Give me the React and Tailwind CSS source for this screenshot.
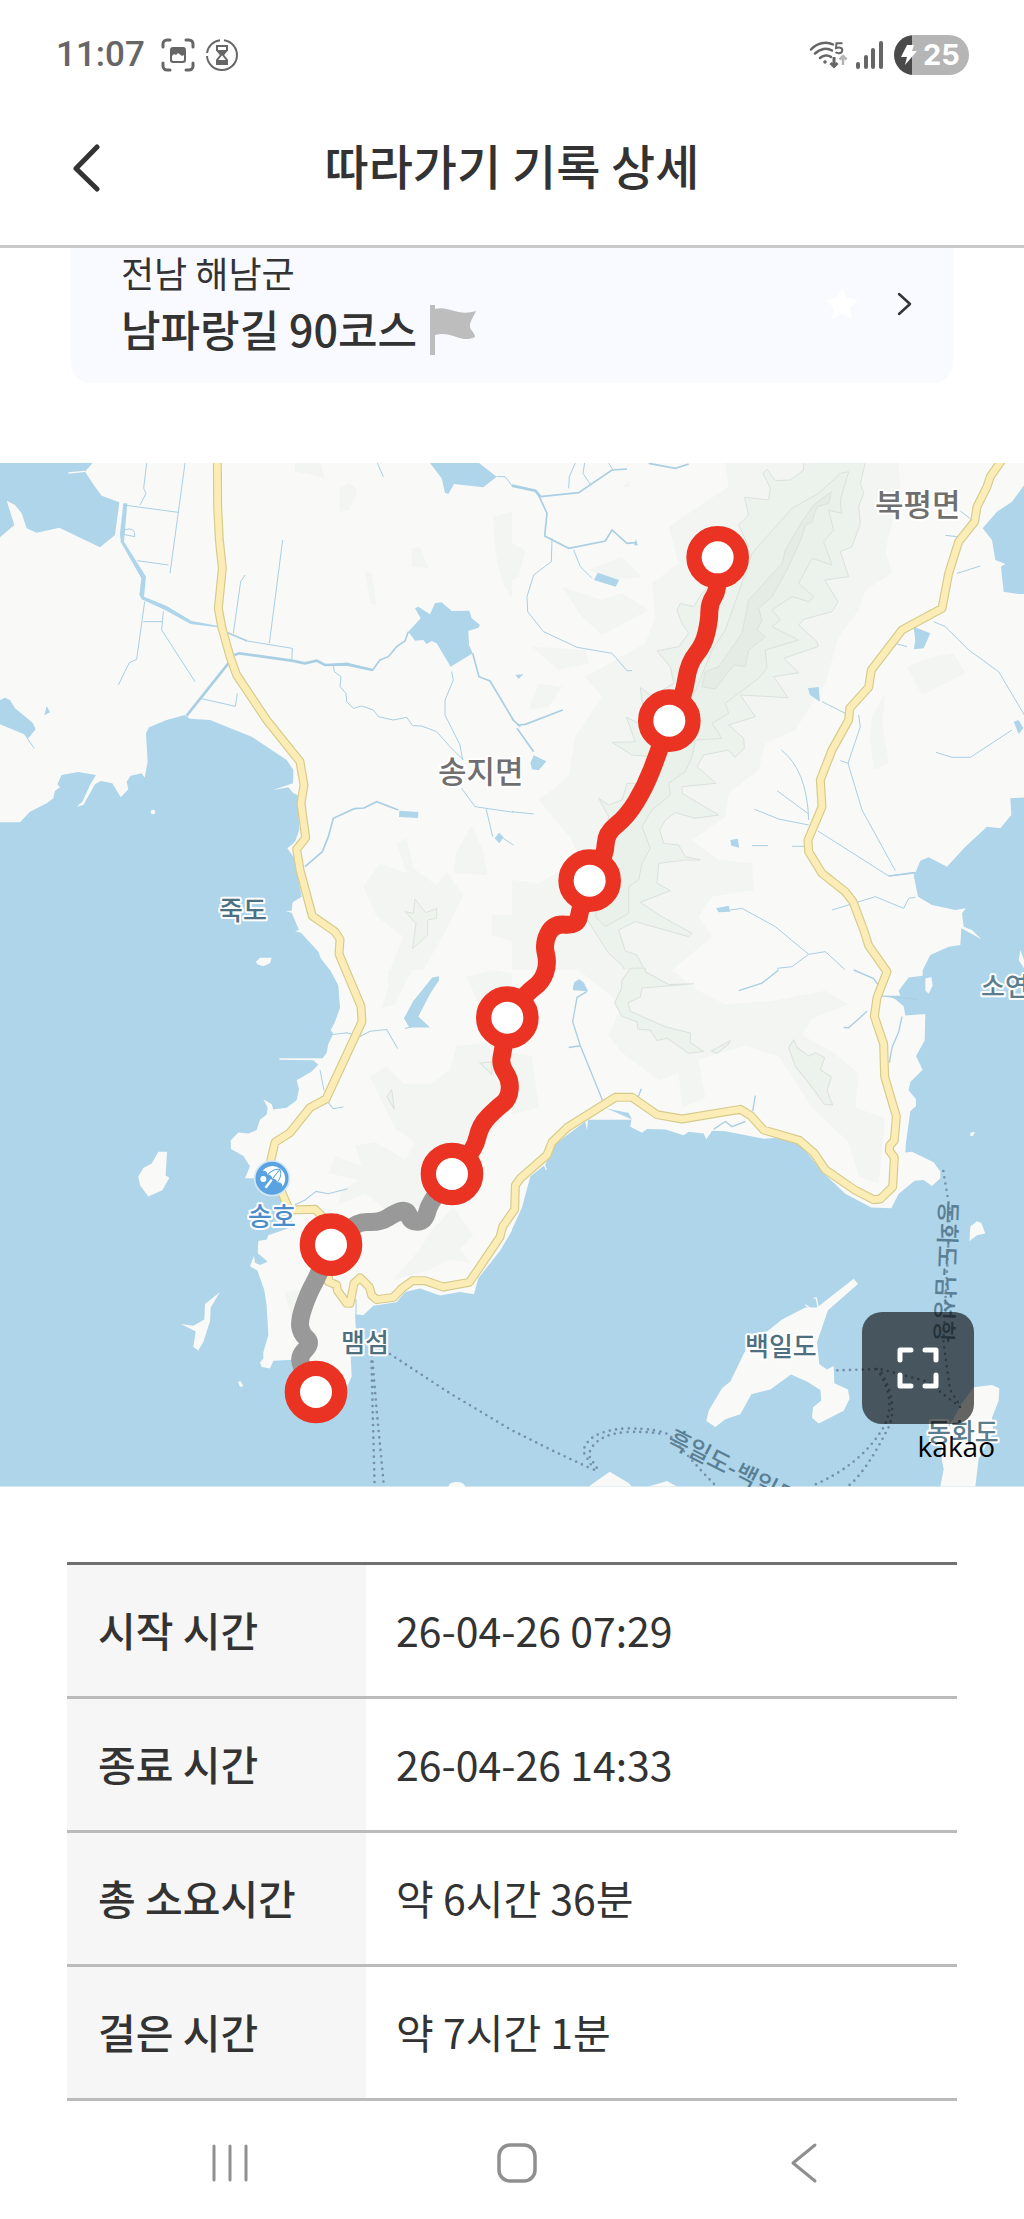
// ─── App.jsx ─────────────────────────────────────────────────────────────────
// Trail record detail: course card, kakao map with the walked route, time table.

const RECORDS = [
  { label: "시작 시간", value: "26-04-26 07:29" },
  { label: "종료 시간", value: "26-04-26 14:33" },
  { label: "총 소요시간", value: "약 6시간 36분" },
  { label: "걸은 시간", value: "약 7시간 1분" },
];

// Checkpoints along the route, in map drawing units
const CHECKPOINTS = [
  [2153, 283],
  [2008, 773],
  [1769, 1253],
  [1522, 1664],
  [1356, 2133],
  [993, 2345],
  [948, 2787],
];

const ROUTE_DONE = [
  [2153, 283], [2158, 375], [2128, 421], [2128, 471], [2111, 546], [2066, 600],
  [2051, 701], [2008, 773], [1976, 866], [1936, 971], [1881, 1061], [1818, 1110],
  [1816, 1176], [1769, 1253], [1741, 1336], [1732, 1388], [1660, 1382], [1630, 1441],
  [1645, 1501], [1626, 1556], [1580, 1590], [1522, 1664], [1510, 1759], [1500, 1805],
  [1532, 1852], [1526, 1908], [1492, 1934], [1440, 1986], [1425, 2058], [1355, 2133],
];

const ROUTE_LEFT = [
  [1355, 2133], [1290, 2213], [1275, 2275], [1232, 2277], [1222, 2240], [1190, 2247],
  [1140, 2279], [1070, 2275], [993, 2344], [953, 2441], [925, 2492], [898, 2570],
  [903, 2611], [936, 2640], [896, 2680], [908, 2719], [948, 2787],
];

const ROAD =
  "M652 -10L653 131L658 231L667 316L655 436L665 491L690 581L710 636L800 771L900 896L912 966L903 1021L917 1124L890 1159L900 1221L937 1359L1005 1406L1020 1429L1017 1473L1083 1630L1086 1676L978 1908L930 1934L870 2009L825 2038L812 2094L845 2187L868 2241L945 2239L993 2285L985 2456L1010 2466L1012 2482L1040 2521H1050L1062 2461L1080 2444L1108 2472L1115 2497L1130 2510L1180 2503L1205 2477L1238 2453H1275L1330 2472L1408 2458L1500 2322L1508 2291L1544 2239L1546 2167L1561 2146L1641 2076L1656 2038L1701 1994L1846 1903H1896L1971 1955L2046 1968L2221 1939L2251 1957L2291 2001L2398 2032L2441 2069L2476 2120L2566 2182L2621 2210L2641 2208L2678 2172L2683 2084L2668 2063L2669 2048L2683 2032L2689 1960L2654 1841L2651 1743L2623 1660L2631 1604L2661 1526L2606 1448L2591 1401L2559 1316L2536 1286L2466 1231L2426 1166L2424 1131L2466 1031L2461 951L2496 861L2546 771L2549 736L2606 673L2614 621L2706 501L2826 436L2846 331L2876 236L2924 176L2931 131L2961 71L2971 41L3010 -15";

const LABELS = [
  { text: "북평면", x: 875, y: 53, size: "text-[31px]", fill: "fill-[#6f6f6f]" },
  { text: "송지면", x: 438, y: 320, size: "text-[31px]", fill: "fill-[#6f6f6f]" },
  { text: "죽도", x: 219, y: 457, size: "text-[26px]", fill: "fill-[#4a7082]" },
  { text: "소연도", x: 981, y: 533, size: "text-[26px]", fill: "fill-[#5b7d8d]" },
  { text: "송호", x: 248, y: 763, size: "text-[26px]", fill: "fill-[#4b8ccb]" },
  { text: "맴섬", x: 341, y: 889, size: "text-[26px]", fill: "fill-[#4d6f80]" },
  { text: "백일도", x: 745, y: 893, size: "text-[26px]", fill: "fill-[#4d6f80]" },
  { text: "동화도", x: 927, y: 979, size: "text-[26px]", fill: "fill-[#5b7d8d]" },
];

// Rounds the corners of a track by curving through the midpoints
function smoothPath(points) {
  const [first, ...rest] = points;
  const last = rest[rest.length - 1];
  let d = `M${first.join(" ")}`;
  for (let i = 0; i < rest.length - 1; i++) {
    const [x, y] = rest[i];
    const [nx, ny] = rest[i + 1];
    d += `Q${x} ${y} ${(x + nx) / 2} ${(y + ny) / 2}`;
  }
  return `${d}L${last.join(" ")}`;
}

function StatusBar() {
  return (
    <div className="flex h-[91px] items-start justify-between pt-[35px] pr-[55px] pl-14">
      <div className="flex h-10 items-center text-[#666]">
        <span className="font-[Roboto,sans-serif] text-[35px] leading-10 font-medium">11:07</span>
        <svg className="ml-4 size-[34px]" viewBox="0 0 34 34" fill="none" stroke="currentColor" strokeWidth="3" strokeLinecap="round">
          <path d="M2 9V6a4 4 0 0 1 4-4h3M25 2h3a4 4 0 0 1 4 4v3M32 25v3a4 4 0 0 1-4 4h-3M9 32H6a4 4 0 0 1-4-4v-3" />
          <path d="M12 9h10a3 3 0 0 1 3 3v10a3 3 0 0 1-3 3H12a3 3 0 0 1-3-3V12a3 3 0 0 1 3-3Zm-1 9v4l1 1h10l1-1v-5l-2 1-4-3-2 2-2-1Z" fill="currentColor" fillRule="evenodd" stroke="none" />
        </svg>
        <svg className="ml-[10px] size-[34px]" viewBox="0 0 34 34" fill="none" stroke="currentColor" strokeWidth="2">
          <path d="M19 2.200A15 15 0 1 1 2 18M2 15A15 15 0 0 1 15 2.200" />
          <path d="M12 8h10v4l-4 5 4 5v4H12v-4l4-5-4-5Z" />
          <path d="M13 13h8l-3 3h-2ZM13 23h8v3h-8Z" fill="currentColor" />
        </svg>
      </div>
      <div className="flex h-10 items-center text-[#666]">
        <svg className="h-[30px] w-[40px]" viewBox="0 0 40 30" fill="none" stroke="currentColor" strokeWidth="2.500">
          <path d="M2 9.500C8 3 17 1 24 4.500M6 13.500c5-5 12-6 17-3M11 18c3-3 8-3.500 11-1" strokeLinecap="round" />
          <circle cx="16" cy="22" r="1.800" fill="currentColor" stroke="none" />
          <path d="M25 17v9M21.500 23l3.500 3.500 3.500-3.500" strokeWidth="3" />
          <path d="M34 25v-8M30.500 19.500 34 16l3.500 3.500" stroke="#b5b5b5" />
          <path d="M33.500 3.200h-6l-.5 4.800c5-1.500 7 .5 6 3.500-1 2.200-4.500 2.200-6.500.8" strokeWidth="2" />
        </svg>
        <svg className="ml-[7px] h-[28px] w-[28px]" viewBox="0 0 28 28" fill="currentColor">
          <rect x="0" y="21" width="4" height="7" rx="2" />
          <rect x="8" y="14" width="4" height="14" rx="2" />
          <rect x="15" y="7" width="4" height="21" rx="2" />
          <rect x="23" y="0" width="4" height="28" rx="2" />
        </svg>
        <div className="ml-[10px] flex h-10 w-[75px] items-center overflow-hidden rounded-full bg-[linear-gradient(to_right,#4a4a4a_18px,#b5b5b5_18px)] pl-[7px] text-white">
          <svg className="h-[22px] w-[16px]" viewBox="0 0 16 22" fill="currentColor">
            <path d="M6 1h7l-2 6h5L4 21l2-8H0Z" />
          </svg>
          <span className="ml-[6px] font-[Inter,sans-serif] text-[29px] leading-10 font-bold">25</span>
        </div>
      </div>
    </div>
  );
}

function Header() {
  return (
    <header className="relative flex h-[157px] items-center justify-center border-b-3 border-[#c9c9c9]">
      <button type="button" aria-label="뒤로" className="absolute left-[69px] p-1">
        <svg className="h-[48px] w-[27px]" viewBox="0 0 27 48" fill="none" stroke="#333" strokeWidth="5" strokeLinecap="round" strokeLinejoin="round">
          <path d="M24 3 3 24.500 24 45" />
        </svg>
      </button>
      <h1 className="pb-2 text-[48px] leading-[56px] font-medium">따라가기 기록 상세</h1>
    </header>
  );
}

function CourseCard() {
  return (
    <section className="px-[71px]">
      <a href="#course" className="flex items-center justify-between rounded-b-[20px] bg-[#f9faff] pr-[40px] pb-[23px] pl-[50px]">
        <div>
          <p className="text-[36px] leading-[48px]">전남 해남군</p>
          <div className="flex items-center gap-[13px]">
            <h2 className="text-[43px] leading-[64px] font-medium">남파랑길 90코스</h2>
            <svg className="mt-1 h-[50px] w-[47px]" viewBox="0 0 47 50" fill="#bdbdbd">
              <path d="M0 0h5v4c14-4 22 8 41 2-3 7-6 10-6 15s5 6 5 11c-14 7-24-7-40-2v20H0Z" />
            </svg>
          </div>
        </div>
        <div className="flex items-center gap-[38px]">
          <svg className="size-[34px]" viewBox="0 0 34 34" fill="#fff">
            <path d="m17 1 5 10 11 2-8 8 2 11-10-5-10 5 2-11-8-8 11-2Z" />
          </svg>
          <svg className="h-[24px] w-[16px]" viewBox="0 0 16 24" fill="none" stroke="#333" strokeWidth="2.500" strokeLinecap="round" strokeLinejoin="round">
            <path d="m2 2 11 10L2 22" />
          </svg>
        </div>
      </a>
    </section>
  );
}

// The ground is drawn as four tiles, each in its own coordinates.
function TileNorthWest() {
  return (
    <g transform="translate(0 -39)">
      <g fill="#f3f5f3">
        <path d="M885 39h75l15 45-90-20ZM1018 115l30-15 25 20-25 60-30 5ZM1235 295l25-5 25 65-50-5ZM1095 368h20l15 100-20-10ZM1480 200l56-15v260l-30-50-20-90ZM1415 1125l35 80 12 70-100-5 5-60Z" />
        <path d="M1190 1180l30-15 20 90 70 50 30-40 50 70-60 120-60 105h-100l40-100-80-60-40-90 50-70 80 30ZM1475 1395h61v80l-60-20Z" />
      </g>
      <path d="M1245 1348l32 40 33-13v30l-27 5v45l-45 40 10-75-33-35 25 5Z" fill="#eef3ee" stroke="#dde3dd" strokeWidth="3" />
      <g fill="#aed5ea">
        <path d="M0 39H278L255 65L285 110L305 137L358 157L345 255L300 292L178 233L110 248L80 235L65 190L45 165L20 152L43 225L0 262Z" />
        <path d="M1290 39H1437L1490 80L1450 112L1362 102L1345 132L1335 128L1325 85Z" />
        <path d="M1245 475L1255 470L1290 493L1305 460L1325 457L1355 483L1408 482L1415 505L1440 525L1435 533L1405 543L1407 585L1418 610L1352 650L1310 580L1295 573L1280 582L1270 570L1245 572L1225 545L1262 505Z" />
        <path d="M0 750L15 743L30 750L45 775L98 818L107 838L83 867L72 853L0 823ZM140 768l10 19-17 9ZM1198 1082l57 4-1 18-57-3ZM1484 1165l13-17 14 14-13 18Z" />
        <path d="M0 1117H60L90 1085L140 1060L160 1045L165 1022L180 1012L172 1003L185 975L235 966L288 975L270 1005L247 1055L230 1070L250 1065L285 1003L303 993L337 1000L362 1042L385 1018L380 995L392 977L425 970L434 983L443 935L438 850L447 832L500 810L555 795L570 806L630 810L755 860L860 930L880 960L879 1000L817 1021L865 1012L880 1030L893 1035L898 1140L885 1175L862 1195L883 1225L905 1340L878 1357L875 1382L857 1384L875 1388L897 1440L885 1444L903 1448L955 1505L962 1525L990 1561H0Z" />
        <path d="M360 250L370 160H382L372 275L438 380L432 440L500 468L575 513L652 527L652 532L572 522L495 480L425 448L418 435L424 385L362 275Z" />
      </g>
      <path d="M205 69L255 64" stroke="#f9f9f8" strokeWidth="4" />
      <g fill="none" stroke="#aacfe3" strokeWidth="3">
        <path d="M440 39L431 115L438 130L420 165M555 39L510 370M370 165L535 187M372 240q35-12 32 20l-34-7M412 332L505 345M434 455L410 628L388 638L355 705M490 485L485 540L585 695M430 515H487M735 375L722 395L700 550M848 270L808 580M735 572L877 595L875 635M600 745L706 769L712 730" />
        <path d="M83 867L103 895M1132 39L1150 80M1490 80L1515 80L1540 112M1000 645L1003 665L1023 680L1020 710L1038 730L1040 755L1060 775L1085 768L1120 780L1135 800L1180 810L1220 802L1238 827L1265 828L1310 845L1350 890L1390 930M1355 665L1360 690L1335 750V795L1380 885L1388 930M1385 1015L1425 1070L1540 1087M1458 1075L1478 1160M1510 1165L1540 1185" />
        <path d="M683 548L740 572M985 645L1040 640L1118 660L1140 630L1165 620L1190 590L1215 573L1225 545M1418 610L1437 680L1470 693L1540 810M915 1250L967 1205L985 1160L1000 1105L1063 1076L1092 1074L1130 1055L1195 1080" strokeWidth="5" />
        <path d="M560 797L685 640M703 615L718 610L875 632L915 640L950 632L975 645L1040 643L1118 660" strokeWidth="8" />
      </g>
      <g fill="#f9f9f8">
        <circle cx="459" cy="1086" r="7" />
        <path d="M768 1535L780 1523H815L810 1540L790 1549L772 1543Z" />
      </g>
    </g>
  );
}

function TileNorthEast() {
  return (
    <g transform="translate(1536 -39)">
      <path d="M640 39H1160L1165 120L1120 300L1140 370L1060 420L1040 480L980 560L940 700L900 760L850 840L760 880L740 960L650 1030L640 1100L540 1170L620 1230L720 1240L725 1320L600 1340L560 1400L600 1460L480 1561H0V1290L80 1300L200 1230L180 1170L80 1050L170 980L190 860L270 740L220 680L400 580L430 500L420 400L500 340L470 230L650 110Z" fill="#f2f5f2" />
      <path d="M150 410l120 40 60-20 80 50-140 75-60-55ZM230 360l100-40 60 60-80 10ZM60 590l160 10 10 40-90 20ZM50 780l30-80 70 10-40 60ZM1185 650l80-30 60-10 35 60-130 65ZM1080 800l40-70-10 90 20 120-45 20-10-90ZM0 280l40 20-20 80-20 10ZM330 110l25-18-5 20Z" fill="#f2f5f2" />
      <g stroke="#dbe2dc" strokeWidth="3" strokeLinejoin="round">
        <path d="M875 30V60L835 90L790 92L765 58L753 70L775 115L770 150L697 142L710 195L680 225L710 290L570 430L545 470L505 460L495 480L510 520L530 550L500 590L435 603L475 650L485 700L420 740L385 712L390 750L400 830L343 802L370 875L300 877L360 915L420 920L400 1000L345 1000L330 1050L290 1065L260 1045L290 1100L270 1200L220 1400L290 1510L330 1545L340 1565H400L375 1515L340 1503L320 1440L370 1415L530 1460L540 1450L450 1400L385 1357L475 1322L435 1300L440 1240L520 1230H565L520 1220L500 1185L455 1180L443 1140L460 1110L490 1088L550 1105L620 1095L510 1030V1010L612 1000L555 950L575 915L650 900L668 922L697 895L695 865L650 825L730 800L685 735L828 743L785 680L860 668L815 625L918 590L915 575L860 525L875 508L960 485L978 455L938 390L1010 380L1000 350L985 305L1020 290L1045 220L1040 170L1055 130L1045 100L1062 30Z" fill="#ecf3ed" />
        <path d="M1010 65L985 150L988 190L950 180L965 240L935 275L960 345L900 325L860 400L905 440L890 455L840 440L780 480L805 510L780 530L860 570L760 600L765 655L740 685L640 760L650 790L600 820L630 865L550 870L540 920L520 965L470 1000L475 1035L420 1080L390 1130L415 1195L390 1240L380 1290L350 1310V1390L280 1430L250 1400L300 1180L460 920L560 700L600 600L640 540L700 370L720 310L840 175L920 130L985 70Z" fill="#e9f1ea" />
        <path d="M958 125L950 160L915 170L900 215L880 225L870 260L825 360L780 440L740 475L750 510L735 540L760 560L710 600L700 650L665 645L610 717L570 710L580 665L620 650L690 550L710 450L810 340L820 300L870 215L905 165Z" fill="#e4ece5" />
      </g>
      <g fill="#aed5ea">
        <path d="M1540 100L1500 155L1455 185L1412 235L1440 270L1450 330L1480 342L1467 350L1475 425L1520 432H1540Z" />
        <path d="M1540 1042L1495 1045L1498 1095L1465 1135L1425 1130L1360 1190L1305 1250L1250 1222L1225 1232L1210 1268L1205 1275L1218 1340L1260 1365L1330 1380L1362 1375L1350 1390L1355 1430L1380 1440L1408 1468L1385 1455L1348 1435L1345 1485L1310 1490L1255 1515L1232 1561H1540Z" />
        <path d="M257 368l64 22-10 20-65-20ZM1205 530l50 20-20 45-30 3 5-25ZM888 715l32-4 4 44-30-20ZM55 940l10-24 38 18-23 27-20-3ZM655 1170l22-4 5 27-24-6ZM612 1375l38-8 5 18-35 2ZM10 675l25-3-15 14ZM1505 815l15-5 14 24-14 18ZM366 285l6-18 6 20Z" />
      </g>
      <g fill="none" stroke="#aacfe3" strokeWidth="3">
        <path d="M190 39L172 80L170 115M218 39L213 70L235 103M290 39L303 60M120 265L118 335L65 375L45 440L47 485L95 545L195 592L300 610L345 662H360M185 300L205 350L240 385M0 1085L65 1092M1265 515L1300 530L1370 600L1460 665L1540 800M1500 840L1375 922L1320 922L1272 907M930 755L1000 790M1040 795L1045 830L1008 940L1050 1080L1150 1262M985 932L1010 940M808 900Q885 960 890 1110M795 1022L890 1092M728 1078L800 1107L890 1125M918 1143L1130 1278L1210 1268M720 1187H768M840 1189H880M655 1380L690 1375L790 1430L890 1513L940 1505L1000 1560M890 1513L840 1550L795 1555M960 1380L1090 1340L1175 1375L1190 1345L1210 1342M1335 370L1405 348M1155 582L1185 590M1345 183L1380 210M1300 256L1335 260" />
        <path d="M75 125L105 190L98 258L170 295L280 273L300 240L345 280L370 278M85 140L200 128L300 60L345 57M410 40L490 55L530 42M15 825L40 823L152 780M15 835L65 905M0 807L25 830M1130 1278L1210 1268" strokeWidth="5" />
        <path d="M0 107L70 122L85 140" strokeWidth="8" />
      </g>
      <path d="M1525 1500L1540 1540V1561L1520 1530Z" fill="#f9f9f8" />
    </g>
  );
}

function TileSouthWest() {
  return (
    <g transform="translate(0 1521) scale(1 1.033)">
      <path d="M0 0H1536V1500H0Z" fill="#aed5ea" />
      <path d="M990 -1L1015 45L1020 110L1005 150L992 175L1000 185L985 215L980 240L968 256H838V261L940 262L955 275L935 295L890 320L897 345L890 378L860 400L820 405L815 390L790 375L803 400L800 420L780 435L770 465L745 475L715 472L692 495L693 520L730 540L750 570L735 605H765L850 650L870 700L880 745L805 770L800 783L775 787L773 822L803 847L780 857L765 850L762 830L750 860L772 873L793 930L800 975L805 1060L790 1110V1128L780 1140L785 1153L810 1157L820 1135L880 1132L950 1220L1040 1215L1055 1180L1052 1120L1060 1070L1068 1050L1065 1000L1090 1003L1120 975L1190 965L1215 935L1260 925L1320 945L1380 935L1422 942L1435 895L1500 815L1537 755V-1Z" fill="#f9f9f8" />
      <path d="M1165 0h70l-50 100-40 10 20-60ZM1400 20l80-20 56 10v90l-100 0ZM1110 310l50-30 50 50 80 0 60-40 20-70 166-15V400l-100 120-20 80-60 10-80 70-100 30-80-60-80 30 10-40 50-30-90-20 20-50 80 30-20-60 60-10 90 50 30-50-60-40ZM1300 750l60-60 60 80-40 40 30 40-60-10-60 30-110 30 80-90ZM855 935l60-10-40 90Z" fill="#f2f5f2" />
      <path d="M1175 348l-14 20 22 36ZM1440 270l35-3v36Z" fill="#eef3ee" stroke="#dbe2dc" strokeWidth="3" />
      <path d="M1297 22l20-4v12L1290 70L1255 135L1290 167H1228L1212 140L1240 90Z" fill="#aed5ea" />
      <path d="M1000 187L1040 182L1080 193L1110 178L1160 173L1193 228M960 290L972 350M985 385L1000 403L1030 398M885 682L915 668L948 643L985 650L1043 635M1068 955V1000M1215 170L1235 165" fill="none" stroke="#aacfe3" strokeWidth="3" />
      <g fill="#f9f9f8">
        <path d="M475 528H501L497 597L508 603L487 640L445 658L420 625L415 600L430 575L455 562Z" />
        <path d="M660 935L632 980L630 1020L610 1080L595 1105L580 1095L587 1050L543 1028L580 1033L613 1015L615 970Z" />
        <path d="M714 1196l8-2 8 14-10 3Z" />
        <ellipse cx="1370" cy="1500" rx="25" ry="13" />
      </g>
    </g>
  );
}

function TileSouthEast() {
  return (
    <g transform="translate(1536 1521) scale(1 1.033)">
      <path d="M0 0H1536V1500H0Z" fill="#aed5ea" />
      <path d="M-1 -1H1232V17L1190 22L1160 60L1165 75L1125 75L1150 85L1175 105L1180 132L1240 128L1238 205L1212 250L1232 290L1195 325L1190 350L1212 375V395L1195 410L1182 500L1180 530L1200 528L1265 558L1285 585V605L1260 627L1235 610L1208 612L1160 650L1138 692L1078 690L1000 650L935 590L885 530L860 500L790 488L755 490L640 468L600 467L583 492L575 475L530 470L515 480L460 463L405 462L390 473L355 455L358 435L228 435L225 467L220 440L130 505L100 565L55 600L30 690L-1 755Z" fill="#f9f9f8" />
      <path d="M0 0H480L560 60L640 100L780 90L940 60L1010 100L900 140L870 190L950 230L1040 300L1030 400L1120 430L1100 620L1040 600L1010 500L900 400L800 250L700 220L560 260L580 370L510 400L500 300L440 320L330 240L290 190L330 100L200 0ZM0 240L60 250L80 400L0 420Z" fill="#f2f5f2" />
      <g fill="#ecf3ed" stroke="#dbe2dc" strokeWidth="3" strokeLinejoin="round">
        <path d="M355 -5L330 30L328 55L308 95L330 135L375 150L378 172L415 175L435 205L465 198L530 242L575 237L535 210V183L460 165L355 120L348 95L385 78L390 52L545 40L470 42L400 5V-5Z" />
        <path d="M598 235L655 205L650 215L615 242ZM845 203L830 225L850 280L900 340L937 390L962 392L945 350L958 310L925 290L938 255L910 240L890 250L855 225Z" />
      </g>
      <path d="M225 62L195 80L182 150L205 220L272 380M170 225L205 220M680 60L750 38L800 0M1025 0L1085 25L1100 45M995 167L1010 168L1065 120M1170 135L1160 180L1140 225L1132 270M388 345L378 370M730 365L722 410M605 462L640 440L660 455L700 440M1110 75L1215 85" fill="none" stroke="#aacfe3" strokeWidth="4" />
      <path d="M182 55l5-20 15-8 14 10 12 25-43-3ZM285 402L350 415L360 434Z" fill="#aed5ea" />
      <g fill="#f9f9f8">
        <path d="M1240 25L1258 20L1262 45L1250 68L1240 60ZM1375 472l14-2-6 12-8 0ZM1395 730L1408 735L1420 765L1395 770L1372 788L1375 745Z" />
        <path d="M1025 897L1038 912L948 988L915 1080L922 1145L945 1160L965 1150L967 1200L1008 1218L1013 1245L995 1280L920 1317L900 1300L903 1270L928 1250L925 1220L885 1195L837 1175L775 1218L718 1232L685 1290L640 1305L610 1327L583 1310L590 1280L630 1215L655 1195L700 1105L705 1060L765 1050L810 1015L880 980L915 980Z" />
        <path d="M1385 1212L1440 1205L1462 1215L1460 1250L1440 1300L1445 1340L1400 1420L1390 1500H1285L1295 1450L1285 1400L1310 1330L1345 1265Z" />
        <path d="M230 1500L293 1457L350 1490L360 1500ZM410 1500L465 1484L495 1500Z" />
      </g>
      <path d="M880 972l16 12M905 953h8l6 30M95 560l8 20" fill="none" stroke="#f9f9f8" strokeWidth="4" />
    </g>
  );
}

function TrailMap() {
  return (
    <section aria-label="지도" className="relative mt-20">
      <svg className="block w-full overflow-hidden bg-[#f9f9f8]" viewBox="0 0 1024 1024">
        <svg width="1024" height="1024" viewBox="0 0 3072 3072">
          <TileNorthWest />
          <TileNorthEast />
          <TileSouthWest />
          <TileSouthEast />

          {/* Ferry lines */}
          <g fill="none" stroke="#7590aa" strokeWidth="8" strokeLinecap="round" strokeDasharray="0 19">
            <path d="M1170 2673L1350 2791L1536 2902L1660 2964L1780 3020" />
            <path d="M1114 2677L1118 2842L1124 3071M1116 2677L1130 2842L1152 3071" />
            <path d="M1782 3020L1750 2966Q1760 2904 1880 2896Q1980 2896 2010 2918L2110 3030L2150 3071" />
            <path d="M1790 3014L1766 2977Q1780 2915 1880 2907Q1960 2905 1990 2915" />
            <path d="M2512 2722L2640 2718L2780 2755L2880 2832M2645 2729Q2700 2832 2660 2904Q2590 3039 2540 3072" />
            <path d="M2630 2718Q2695 2811 2650 2894Q2580 3010 2430 3071" />
            <path d="M2830 2124L2850 2244L2830 2636L2850 2780L2880 2828" />
          </g>

          {/* Local road */}
          <g fill="none" strokeLinejoin="round">
            <path d={ROAD} stroke="#d6cb8c" strokeWidth="27" />
            <path d={ROAD} stroke="#fbedb5" strokeWidth="20" />
          </g>

          {/* Route and checkpoints */}
          <g fill="none" strokeWidth="54" strokeLinejoin="round" strokeLinecap="round">
            <path d={smoothPath(ROUTE_LEFT)} stroke="#999" />
            <path d={smoothPath(ROUTE_DONE)} stroke="#eb3323" />
          </g>
          {CHECKPOINTS.map(([cx, cy]) => (
            <circle key={cy} cx={cx} cy={cy} r="71" fill="#fff" stroke="#eb3323" strokeWidth="46" />
          ))}

          {/* Beach pin */}
          <g transform="translate(816 2146)">
            <circle r="52" fill="#5ba3e0" stroke="#d3e8f6" strokeWidth="5" />
            <circle cx="-26" cy="2" r="9" fill="#fff" />
            <g transform="rotate(38)">
              <path d="M-36 0A38 38 0 0 1 40 0Q30 -10 20 0Q11 -8 2 0Q-8 -8 -17 0Q-27 -10 -36 0Z" fill="#fff" />
              <path d="M2 -36V0M2 -36Q-16 -26 -17 0M2 -36Q20 -26 20 0" fill="none" stroke="#5ba3e0" strokeWidth="3" />
              <path d="M2 4V34" stroke="#fff" strokeWidth="7" />
            </g>
          </g>
        </svg>

        <g className="font-medium" stroke="#fff" strokeWidth="4" strokeLinejoin="round" paintOrder="stroke">
          {LABELS.map((l) => (
            <text key={l.text} x={l.x} y={l.y} className={`${l.size} ${l.fill}`}>
              {l.text}
            </text>
          ))}
        </g>
        <g className="fill-[#5a7f94] text-[24px] font-medium">
          <text transform="translate(940 738) rotate(92)">동화도-남성항</text>
          <text transform="translate(666 981) rotate(27)">흑일도-백일도</text>
        </g>
      </svg>

      <button
        type="button"
        aria-label="전체 화면"
        className="absolute right-[50px] bottom-[63px] flex size-[112px] items-center justify-center rounded-[20px] bg-black/60"
      >
        <svg className="size-[42px]" viewBox="0 0 42 42" fill="none" stroke="#fff" strokeWidth="5" strokeLinecap="round" strokeLinejoin="round">
          <path d="M3 13V3h11M28 3h11v10M39 28v11H28M14 39H3V28" />
        </svg>
      </button>
      <span className="absolute right-[29px] bottom-[21px] font-['Open_Sans',sans-serif] text-[28px] leading-[40px] text-black">
        kakao
      </span>
    </section>
  );
}

function RecordTable() {
  return (
    <section className="px-[67px] pt-[75px]">
      <table className="w-full border-collapse border-t-3 border-[#707070] text-left text-[41px] leading-[60px]">
        <tbody>
          {RECORDS.map((r) => (
            <tr key={r.label} className="h-[134px] border-b-3 border-[#bbb]">
              <th scope="row" className="w-[299px] bg-[#f6f6f6] pb-1 pl-[31px] font-medium">{r.label}</th>
              <td className="pb-1 pl-[30px]">{r.value}</td>
            </tr>
          ))}
        </tbody>
      </table>
    </section>
  );
}

function NavBar() {
  return (
    <nav className="grid h-[119px] grid-cols-3 pt-1 pr-[77px] pl-[87px] text-[#8f8f8f]">
      <button type="button" aria-label="최근 앱" className="flex items-center justify-center">
        <svg className="h-[40px] w-[38px]" viewBox="0 0 38 40" fill="none" stroke="currentColor" strokeWidth="3" strokeLinecap="round">
          <path d="M3 3v34M19 3v34M35 3v34" />
        </svg>
      </button>
      <button type="button" aria-label="홈" className="flex items-center justify-center">
        <svg className="size-[42px]" viewBox="0 0 42 42" fill="none" stroke="currentColor" strokeWidth="3.500">
          <rect x="3" y="3" width="36" height="36" rx="11" />
        </svg>
      </button>
      <button type="button" aria-label="이전" className="flex items-center justify-center">
        <svg className="h-[42px] w-[28px]" viewBox="0 0 28 42" fill="none" stroke="currentColor" strokeWidth="3" strokeLinecap="round" strokeLinejoin="round">
          <path d="M25 3 3 21l22 18" />
        </svg>
      </button>
    </nav>
  );
}

export default function App() {
  return (
    <div className="w-full bg-white font-['Noto_Sans_CJK_KR',sans-serif] text-[#333]">
      <StatusBar />
      <Header />
      <main>
        <CourseCard />
        <TrailMap />
        <RecordTable />
      </main>
      <NavBar />
    </div>
  );
}
